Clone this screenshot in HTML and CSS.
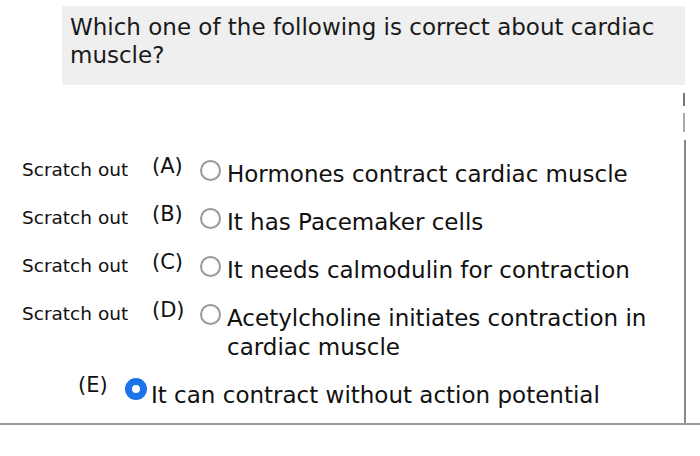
FILE: index.html
```html
<!DOCTYPE html>
<html>
<head>
<meta charset="utf-8">
<link rel="stylesheet" href="styles.css">
</head>
<body>
<div class="sheet">
  <div class="question">Which one of the following is correct about cardiac muscle?</div>
  <div class="spacer"></div>
  <div class="options">
    <div class="row">
      <span class="scratch">Scratch out</span>
      <span class="label">(A)</span>
      <span class="radio"></span>
      <span class="text">Hormones contract cardiac muscle</span>
    </div>
    <div class="row">
      <span class="scratch">Scratch out</span>
      <span class="label">(B)</span>
      <span class="radio"></span>
      <span class="text">It has Pacemaker cells</span>
    </div>
    <div class="row">
      <span class="scratch">Scratch out</span>
      <span class="label">(C)</span>
      <span class="radio"></span>
      <span class="text">It needs calmodulin for contraction</span>
    </div>
    <div class="row">
      <span class="scratch">Scratch out</span>
      <span class="label">(D)</span>
      <span class="radio"></span>
      <span class="text">Acetylcholine initiates contraction in cardiac muscle</span>
    </div>
    <div class="row row-selected">
      <span class="label">(E)</span>
      <span class="radio radio-on"></span>
      <span class="text">It can contract without action potential</span>
    </div>
  </div>
</div>
</body>
</html>
```

FILE: styles.css
```css
html, body {
  margin: 0;
  padding: 0;
  background: #ffffff;
}
body {
  font-family: "DejaVu Sans", Verdana, sans-serif;
  color: #111;
  width: 700px;
  height: 456px;
  overflow: hidden;
}
.sheet {
  width: 700px;
  border-bottom: 2px solid #9a9a9a;
}
.question {
  margin: 6px 15px 0 62px;
  background: #efefef;
  padding: 7px 8px 16px 8px;
  font-size: 23px;
  line-height: 28px;
  height: 56px;
  box-sizing: content-box;
  color: #1a1a1a;
}
.spacer {
  width: 686px;
  height: 55px;
  background-image: linear-gradient(to bottom,
    transparent 0, transparent 8px,
    #777 8px, #777 21px,
    transparent 21px, transparent 28px,
    #aaa 28px, #aaa 47px,
    transparent 47px);
  background-repeat: no-repeat;
  background-size: 2px 55px;
  background-position: 683px 0;
}
.options {
  width: 684px;
  border-right: 2px solid #888;
  padding-top: 20px;
  padding-bottom: 13px;
}
.row {
  display: flex;
  align-items: flex-start;
  padding-left: 22px;
  margin-bottom: 19px;
}
.row:last-child {
  margin-bottom: 0;
}
.scratch {
  font-size: 18.5px;
  line-height: 20px;
  width: 130px;
  flex: none;
}
.label {
  font-size: 21px;
  line-height: 22px;
  width: 48px;
  margin-top: -5px;
  flex: none;
}
.radio {
  flex: none;
  box-sizing: border-box;
  width: 21px;
  height: 21px;
  border: 2px solid #999;
  border-radius: 50%;
  margin-top: 0;
  margin-right: 6px;
}
.radio-on {
  width: 22px;
  height: 22px;
  border: 7px solid #1a73e8;
  background: #fff;
  margin-top: -3px;
  margin-right: 4px;
}
.text {
  font-size: 23px;
  line-height: 29px;
  flex: 1;
}
.row-selected {
  padding-left: 78px;
}
.row-selected .label {
  width: 47px;
  margin-top: -7px;
}
```
